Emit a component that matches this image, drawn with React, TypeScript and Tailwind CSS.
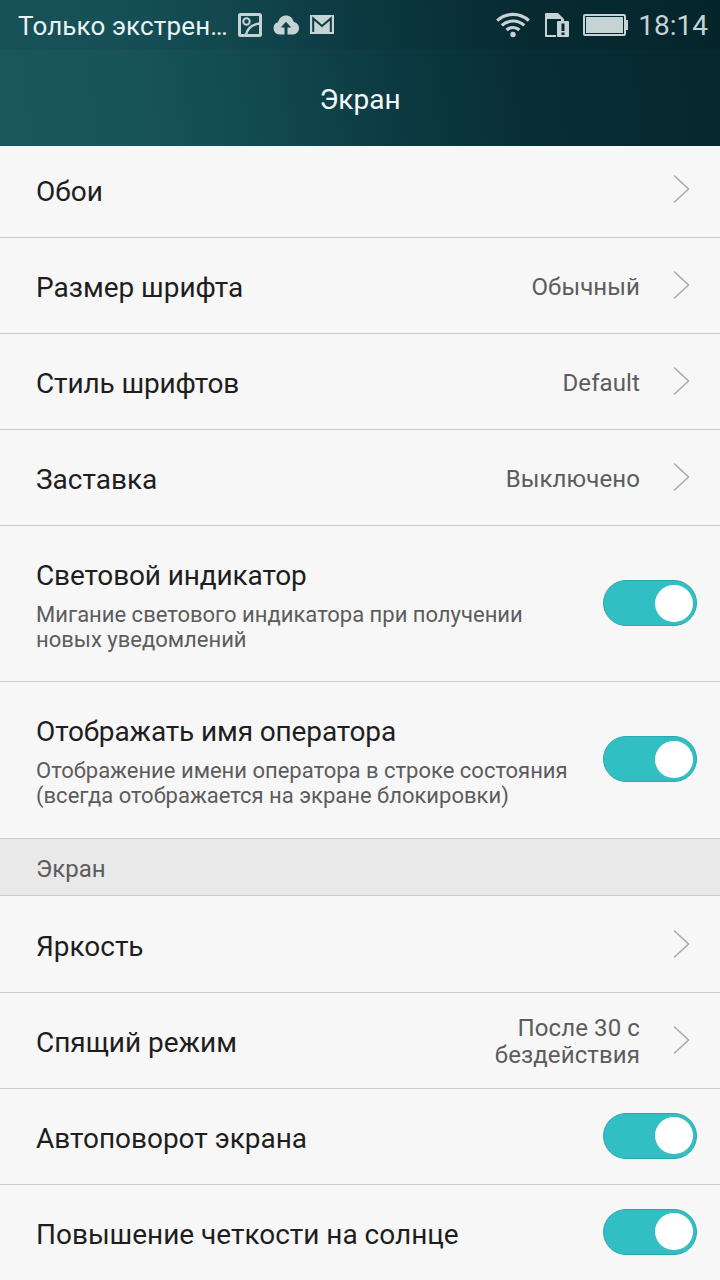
import type { ReactNode } from "react";
import clsx from "clsx";

type RowProps = {
  title: string;
  summary?: string[];
  value?: string[];
  toggle?: boolean;
  tight?: boolean;
  className?: string;
};

function StatusBar() {
  return (
    <div className="flex h-[50px] shrink-0 items-center bg-black/5 pl-[18px] pr-[12px] text-[#c5d3d5]">
      <span className="w-[220px] whitespace-nowrap pt-[2px] text-[26px] leading-[30px] tracking-[0.13px] text-[#e9f3f4]">
        Только экстрен…
      </span>
      <PictureIcon />
      <CloudUploadIcon />
      <MailIcon />
      <div className="ml-auto flex items-center">
        <WifiIcon />
        <SimAlertIcon />
        <BatteryIcon />
        <span className="ml-[10px] pt-[2px] text-[28px] leading-[34px]">18:14</span>
      </div>
    </div>
  );
}

function PictureIcon() {
  return (
    <svg width="24" height="24" viewBox="0 0 24 24" fill="none" stroke="currentColor">
      <rect x="1.5" y="1.5" width="21" height="21" rx="1" strokeWidth="3" />
      <circle cx="8.5" cy="8.5" r="3.2" strokeWidth="2" />
      <path d="M8 21.5C9.500 16 14 11 22 10.5" strokeWidth="2.4" />
    </svg>
  );
}

function CloudUploadIcon() {
  return (
    <svg className="ml-[11px]" width="26" height="20" viewBox="0 0 26 20" fill="currentColor">
      <path
        fillRule="evenodd"
        d="M6.500 19.500A6.300 6.300 0 0 1 5 7.200C6.200 3.200 9.200.5 13 .5s7 2.700 7.800 6.500A6.300 6.300 0 0 1 20 19.500h-5.500V12.500h3.700L13 6.700 7.800 12.500h3.700v7z"
      />
    </svg>
  );
}

function MailIcon() {
  return (
    <svg className="ml-[11px] -mt-px" width="24" height="19" viewBox="0 0 24 19">
      <path d="M0 0h24v19H0z" fill="currentColor" />
      <path d="M3.200 17V3.500L12 11l8.800-7.500V17" fill="none" stroke="#0c3a42" strokeWidth="2" />
    </svg>
  );
}

function WifiIcon() {
  return (
    <svg width="34" height="26" viewBox="0 0 34 26" fill="none" stroke="currentColor" strokeWidth="3.200">
      <path d="M1.200 8.700a23 23 0 0 1 31.600 0" />
      <path d="M5.800 13.400a16.500 16.500 0 0 1 22.400 0" />
      <path d="M10.600 18a9.500 9.500 0 0 1 12.800 0" />
      <circle cx="17" cy="22.500" r="2.700" fill="currentColor" stroke="none" />
    </svg>
  );
}

function SimAlertIcon() {
  return (
    <svg className="ml-[15px]" width="24" height="24" viewBox="0 0 24 24">
      <path
        fillRule="evenodd"
        fill="currentColor"
        d="M1 0h12l6 6v2h-3V6H2v16h9v2H1a1 1 0 0 1-1-1V1a1 1 0 0 1 1-1z"
      />
      <rect x="12" y="8" width="12" height="16" rx="1" fill="currentColor" />
      <path d="M16.500 10.500h3V18h-3zM16.500 19.500h3V22h-3z" fill="#07292f" />
    </svg>
  );
}

function BatteryIcon() {
  return (
    <svg className="ml-[14px]" width="45" height="22" viewBox="0 0 45 22" fill="currentColor">
      <rect x="1" y="1" width="41" height="20" rx="1" fill="none" stroke="currentColor" strokeWidth="2" />
      <rect x="3" y="3" width="37" height="16" />
      <rect x="43" y="6" width="2" height="10" />
    </svg>
  );
}

function Chevron() {
  return (
    <svg
      className="-mt-px ml-[33px] mr-[30px] shrink-0"
      width="17"
      height="30"
      viewBox="0 0 17 30"
      fill="none"
      stroke="#a9a9a9"
      strokeWidth="1.500"
    >
      <path d="M1 1.500 15.500 15 1 28.500" />
    </svg>
  );
}

function Toggle() {
  return (
    <div className="-mt-[2px] mr-[23px] flex h-[46px] w-[94px] shrink-0 items-center justify-end rounded-full border border-[#2aa9ad] bg-[#32bfc4] pr-[3px]">
      <div className="h-[37px] w-[38px] rounded-full bg-white" />
    </div>
  );
}

function Row({ title, summary, value, toggle, tight, className }: RowProps) {
  return (
    <div className={clsx("flex shrink-0 items-center border-b border-[#cbcbcb] pl-9", className)}>
      <div className="min-w-0 flex-1 whitespace-nowrap">
        <div
          className={clsx(
            "pt-[3px] text-[28px] leading-[33px] text-[#1e1e1e]",
            tight ? "tracking-[-0.13px]" : "tracking-[-0.02px]",
          )}
        >
          {title}
        </div>
        {summary && (
          <div className="pt-[10px] text-[22px] leading-[25px] text-[#5c5c5c]">
            {summary.map((line) => (
              <div key={line}>{line}</div>
            ))}
          </div>
        )}
      </div>
      {value && (
        <div
          className={clsx(
            "whitespace-nowrap text-right text-[24px] leading-[27px] tracking-[0.1px] text-[#5c5c5c]",
            value.length > 1 ? "pt-[2px]" : "pt-[4px]",
          )}
        >
          {value.map((line) => (
            <div key={line}>{line}</div>
          ))}
        </div>
      )}
      {toggle ? <Toggle /> : <Chevron />}
    </div>
  );
}

function SectionHeader({ children }: { children: ReactNode }) {
  return (
    <div className="flex h-[57px] shrink-0 items-center border-b border-[#cbcbcb] bg-[#e9e9e9] pl-9 pt-[3px] text-[24px] text-[#5c5c5c]">
      {children}
    </div>
  );
}

export default function App() {
  return (
    <div className="flex h-[1280px] w-[720px] flex-col overflow-hidden bg-[#f7f7f7] font-['Roboto','Noto_Sans',sans-serif]">
      <header className="flex h-[146px] shrink-0 flex-col bg-[linear-gradient(82deg,#1a575d_0%,#18555b_18%,#124951_36%,#0c3a42_54%,#082d34_74%,#06282f_100%)]">
        <StatusBar />
        <h1 className="pt-[33px] text-center text-[28px] leading-[33px] text-[#f5f9f9]">Экран</h1>
      </header>

      <Row title="Обои" className="h-[92px] pb-1" />
      <Row title="Размер шрифта" value={["Обычный"]} className="h-24" />
      <Row title="Стиль шрифтов" value={["Default"]} tight className="h-24" />
      <Row title="Заставка" value={["Выключено"]} className="h-24" />
      <Row
        title="Световой индикатор"
        summary={["Мигание светового индикатора при получении", "новых уведомлений"]}
        toggle
        tight
        className="h-[156px] pt-px"
      />
      <Row
        title="Отображать имя оператора"
        summary={["Отображение имени оператора в строке состояния", "(всегда отображается на экране блокировки)"]}
        toggle
        tight
        className="h-[157px]"
      />

      <SectionHeader>Экран</SectionHeader>

      <Row title="Яркость" className="h-[97px] pt-px" />
      <Row title="Спящий режим" value={["После 30 с", "бездействия"]} className="h-24" />
      <Row title="Автоповорот экрана" toggle className="h-24" />
      <Row title="Повышение четкости на солнце" toggle className="h-24" />
    </div>
  );
}
